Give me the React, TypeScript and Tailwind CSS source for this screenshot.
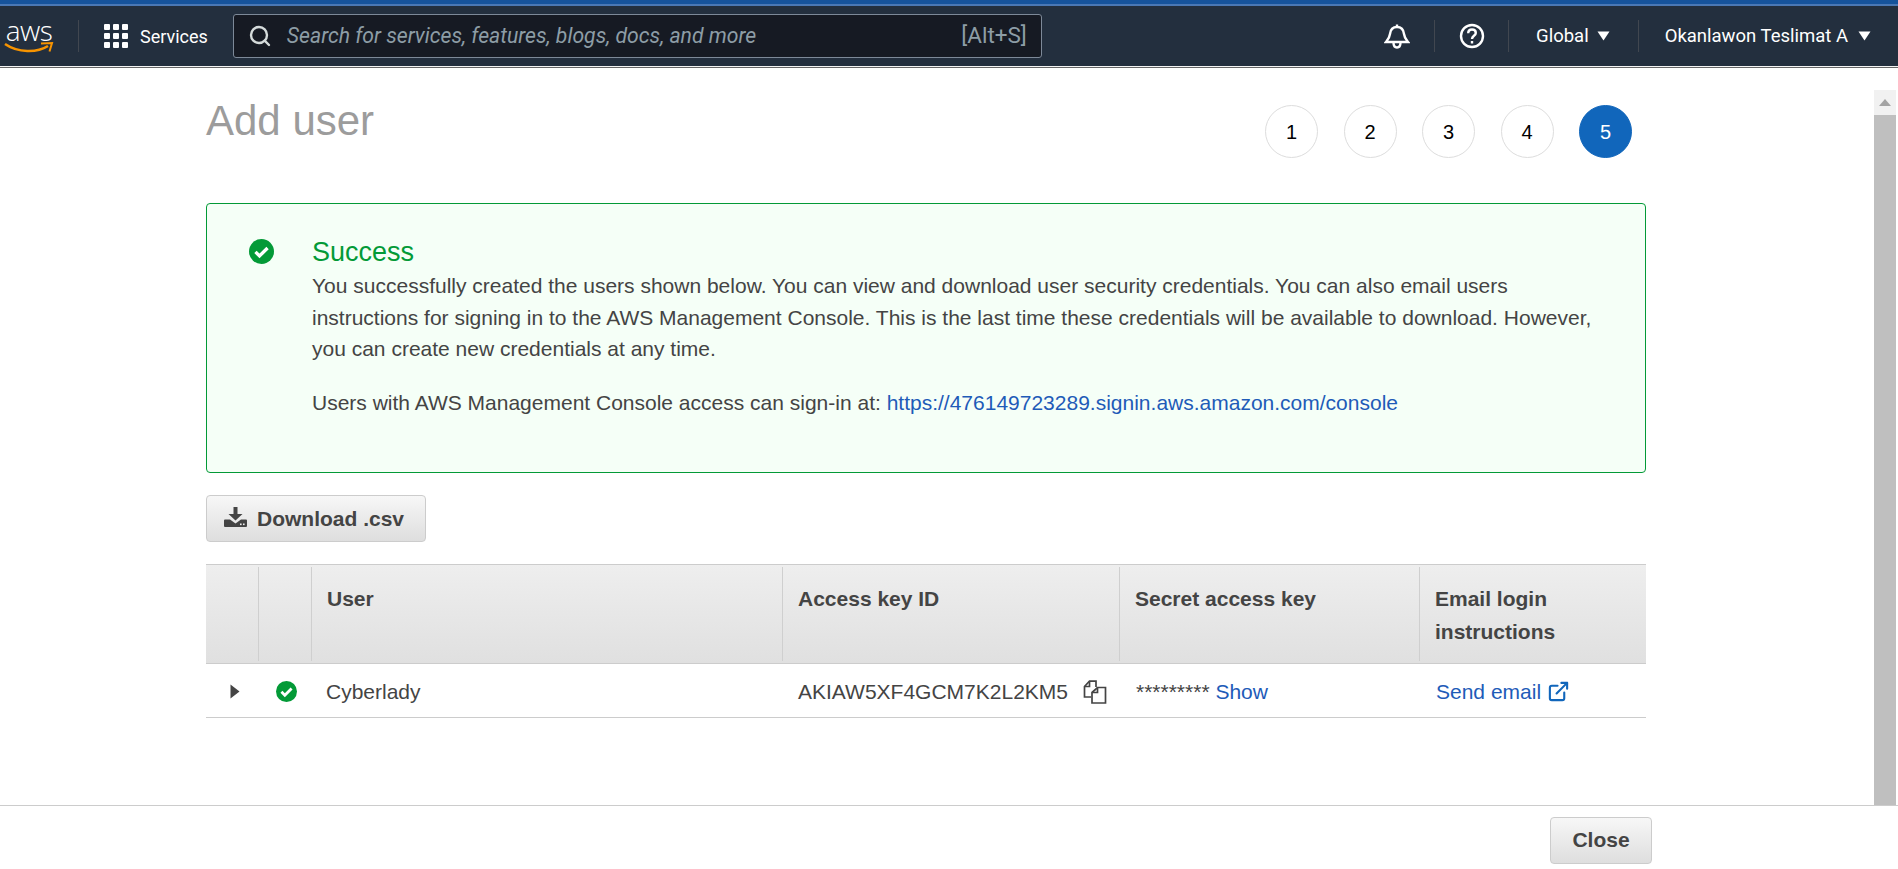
import React from "react";
import { Search, ExternalLink } from "lucide-react";

const navFont = "font-['Roboto',sans-serif]";

const GridIcon = () => (
  <div className="grid w-[24px] grid-cols-3 gap-[3px]">
    {[0, 1, 2, 3, 4, 5, 6, 7, 8].map((i) => (
      <div key={i} className="h-[6px] w-[6px] rounded-[1px] bg-white" />
    ))}
  </div>
);

const Caret = () => (
  <svg width="13" height="10" viewBox="0 0 13 10" className="fill-white">
    <path d="M0.5 0.5h12L6.5 9.5z" />
  </svg>
);

const Divider = () => <div className="h-[32px] w-px bg-[#414750]" />;

const CheckCircle = ({ size }: { size: number }) => (
  <svg width={size} height={size} viewBox="0 0 24 24">
    <circle cx="12" cy="12" r="12" fill="#039a37" />
    <path
      d="M6.2 12.4l3.9 3.9 7.7-7.7"
      fill="none"
      stroke="#fff"
      strokeWidth="3.2"
    />
  </svg>
);

const CopyIcon = () => (
  <svg width="24" height="24" viewBox="0 0 24 24" fill="none" stroke="#444" strokeWidth="1.7">
    <path d="M8 17H1.5V6.5L6.5 1.2H13V7" />
    <path d="M6.5 1.5V6.5H1.5" />
    <path d="M9 23V12.5L14.5 7.5H22.5V23z" fill="#fff" />
    <path d="M14.5 7.5V12.5H9" />
  </svg>
);

const DownloadIcon = () => (
  <svg width="23" height="20" viewBox="0 0 23 20" fill="#444">
    <path d="M9.500 0h4v7h5l-7 6.500-7-6.500h5z" />
    <path d="M1 12.500h5l5.500 4 5.500-4h5q1 0 1 1v5.500q0 1-1 1h-21q-1 0-1-1v-5.500q0-1 1-1z" />
    <rect x="16" y="16.500" width="1.600" height="1.600" fill="#eee" />
    <rect x="19" y="16.500" width="1.600" height="1.600" fill="#eee" />
  </svg>
);

const Step = ({ n, active }: { n: number; active?: boolean }) => (
  <div
    className={`flex h-[53px] w-[53px] items-center justify-center rounded-full border text-[20px] ${
      active ? "border-[#1166bb] bg-[#1166bb] text-white" : "border-[#dddddd] bg-white text-black"
    }`}
  >
    {n}
  </div>
);

const headerCell = "border-l border-[#cfcfcf] px-[15px] pt-[15px] pb-[13px]";

const App = () => {
  return (
    <div className="flex h-[869px] w-full flex-col overflow-hidden bg-white font-['Liberation_Sans',Arial,sans-serif] text-[#444444]">
      {/* top nav */}
      <div className="h-[4px] bg-[#16539b]" />
      <div className="h-[2px] bg-[#4a78b5]" />
      <div className={`flex h-[60px] items-center bg-[#232f3e] text-white ${navFont}`}>
        <div className="ml-[4px] flex w-[50px] flex-col items-center">
          <span className="font-['Open_Sans',sans-serif] text-[28px] leading-[22px] font-light tracking-[-0.5px]">aws</span>
          <svg width="50" height="13" viewBox="0 0 50 13" fill="none">
            <path d="M1 3C14 12 33 12 44 5" stroke="#f79400" strokeWidth="2.600" />
            <path d="M37 2.500L48 2 45.500 10.500" stroke="#f79400" strokeWidth="2" />
          </svg>
        </div>
        <div className="ml-[24px]">
          <Divider />
        </div>
        <div className="ml-[25px]">
          <GridIcon />
        </div>
        <span className="ml-[12px] text-[18px]">Services</span>
        <div className="ml-[25px] flex h-[44px] w-[809px] items-center rounded-[3px] border border-[#7d8998] bg-[#161a23] pr-[14px] pl-[14px]">
          <Search size={24} strokeWidth={2.4} className="text-[#d5dbdb]" />
          <span className="ml-[15px] flex-1 text-[21.200px] text-[#8d9da6] italic">
            Search for services, features, blogs, docs, and more
          </span>
          <span className="text-[22.500px] text-[#8d9da6]">[Alt+S]</span>
        </div>
        <div className="ml-auto flex items-center pr-[27px]">
          <svg width="26" height="26" viewBox="0 0 26 26" fill="none" stroke="#fff" strokeWidth="2.400">
            <path d="M13 1.500v2.500" />
            <path d="M2 19c2-2.500 3.500-4 4-8 .5-4.500 3-7 7-7s6.500 2.500 7 7c.5 4 2 5.500 4 8z" />
            <path d="M9.500 19.500c0 3 1.500 5 3.500 5s3.500-2 3.500-5" />
          </svg>
          <div className="ml-[24px]">
            <Divider />
          </div>
          <svg width="26" height="26" viewBox="0 0 26 26" fill="none" stroke="#fff" strokeWidth="2.400" className="ml-[24px]">
            <circle cx="13" cy="13" r="11" />
            <path d="M9.200 10.200c0-2.300 1.700-3.700 3.800-3.700s3.800 1.300 3.800 3.400c0 2.800-3.800 2.900-3.800 6" />
            <path d="M13 18v2.500" />
          </svg>
          <div className="ml-[23px]">
            <Divider />
          </div>
          <span className="ml-[27px] pt-[1px] text-[18.500px]">Global</span>
          <div className="ml-[8px]">
            <Caret />
          </div>
          <div className="ml-[28px]">
            <Divider />
          </div>
          <span className="ml-[26px] pt-[1px] text-[18.500px]">Okanlawon Teslimat A</span>
          <div className="ml-[10px]">
            <Caret />
          </div>
        </div>
      </div>
      <div className="h-px bg-[#f4f4f4]" />
      <div className="h-px bg-[#666666]" />

      {/* wizard body */}
      <div className="flex min-h-0 flex-1">
        <div className="min-w-0 flex-1 pl-[206px]">
          <div className="flex w-[1440px] items-start justify-between pr-[14px]">
            <h1 className="pt-[29px] text-[42px] leading-[48px] text-[#9c9c9c]">Add user</h1>
            <div className="flex gap-[25.500px] pt-[37px]">
              <Step n={1} />
              <Step n={2} />
              <Step n={3} />
              <Step n={4} />
              <Step n={5} active />
            </div>
          </div>

          <div className="mt-[45px] flex h-[270px] w-[1440px] rounded-[4px] border border-[#039a37] bg-[#f5fff7] pt-[32px] pl-[42px]">
            <div className="w-[63px] shrink-0 pt-[3px]">
              <CheckCircle size={25} />
            </div>
            <div className="text-[21px] leading-[31.500px]">
              <div className="mb-[2px] text-[27px] leading-[32px] text-[#039a37]">Success</div>
              <p>
                You successfully created the users shown below. You can view and download user security credentials. You can also email users
                <br />
                instructions for signing in to the AWS Management Console. This is the last time these credentials will be available to download. However,
                <br />
                you can create new credentials at any time.
              </p>
              <p className="mt-[22px]">
                Users with AWS Management Console access can sign-in at:{" "}
                <a className="text-[#1e5bb8]">https://476149723289.signin.aws.amazon.com/console</a>
              </p>
            </div>
          </div>

          <button className="mt-[22px] flex h-[47px] w-[220px] items-center rounded-[4px] border border-[#cccccc] bg-gradient-to-b from-[#f7f7f7] to-[#dedede] pl-[17px] text-[21px] font-bold text-[#444444]">
            <span className="-mt-[4px] flex">
              <DownloadIcon />
            </span>
            <span className="ml-[10px]">Download .csv</span>
          </button>

          <div className="mt-[22px] w-[1440px] text-[21px]">
            <div className="grid grid-cols-[52px_53px_471px_337px_300px_227px] border-y border-[#cccccc] bg-gradient-to-b from-[#eeeeee] to-[#e0e0e0] py-[2px] leading-[33px] font-bold">
              <div className="border-l border-transparent" />
              <div className={headerCell} />
              <div className={headerCell}>User</div>
              <div className={headerCell}>Access key ID</div>
              <div className={headerCell}>Secret access key</div>
              <div className={headerCell}>Email login instructions</div>
            </div>
            <div className="grid h-[54px] grid-cols-[52px_53px_471px_337px_300px_227px] items-center border-b border-[#cccccc] pt-[2px]">
              <div className="flex justify-center pl-[5px]">
                <svg width="10" height="15" viewBox="0 0 10 15" fill="#444">
                  <path d="M0.500 0.500L9.500 7.500 0.500 14.500z" />
                </svg>
              </div>
              <div className="flex justify-center pl-[3px]">
                <CheckCircle size={21} />
              </div>
              <div className="pl-[15px]">Cyberlady</div>
              <div className="flex items-center pl-[16px]">
                AKIAW5XF4GCM7K2L2KM5
                <span className="ml-[15px] flex">
                  <CopyIcon />
                </span>
              </div>
              <div className="pl-[17px]">
                <span className="text-[#444444]">*********</span> <a className="text-[#1e5bb8]">Show</a>
              </div>
              <div className="flex items-center pl-[17px] text-[#1e5bb8]">
                Send email
                <ExternalLink size={23} strokeWidth={2.200} className="ml-[6px] text-[#1166bb]" />
              </div>
            </div>
          </div>
        </div>

        {/* scrollbar */}
        <div className="mt-[22px] mr-[2px] flex w-[22px] flex-col bg-[#f1f1f1]">
          <div className="flex h-[25px] items-center justify-center">
            <div className="h-0 w-0 border-x-[6px] border-b-[7px] border-x-transparent border-b-[#a3a3a3]" />
          </div>
          <div className="flex-1 bg-[#bfbfbf]" />
        </div>
      </div>

      {/* footer */}
      <div className="flex h-[64px] shrink-0 items-start justify-end border-t border-[#cccccc] pt-[11px] pr-[246px]">
        <button className="h-[47px] w-[102px] rounded-[4px] border border-[#cccccc] bg-gradient-to-b from-[#f7f7f7] to-[#dedede] pb-[2px] text-[21px] font-bold text-[#444444]">
          Close
        </button>
      </div>
    </div>
  );
};

export default App;
